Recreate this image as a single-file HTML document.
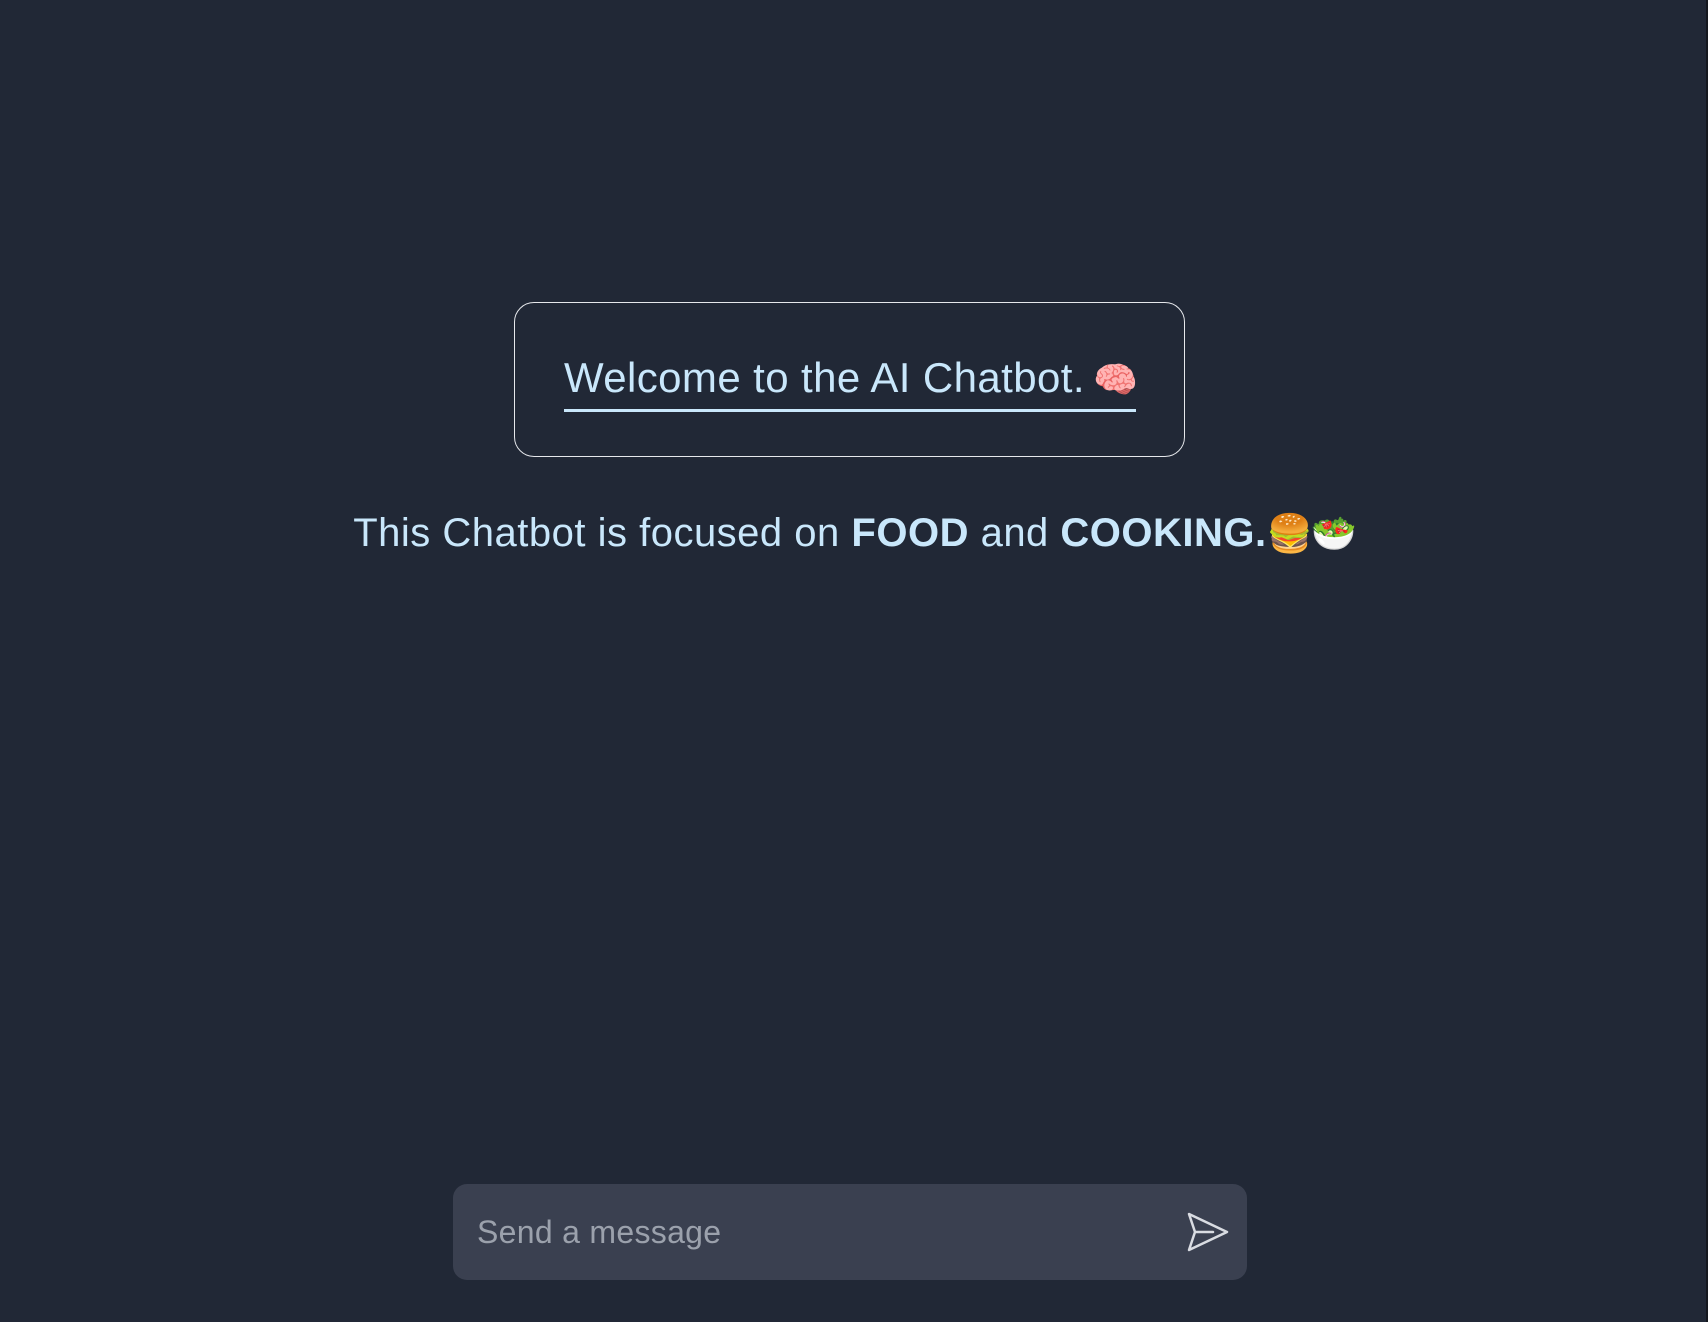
<!DOCTYPE html>
<html><head><meta charset="utf-8"><style>
html,body{margin:0;padding:0;width:1708px;height:1322px;background:#212836;overflow:hidden;font-family:"Liberation Sans",sans-serif;color:#c9e7fb}
.box{position:absolute;left:514px;top:302px;width:671px;height:155px;border:1.5px solid #e6e8ec;border-radius:20px;box-sizing:border-box}
.h{position:absolute;left:564px;top:354px;font-size:42px;line-height:48px;white-space:nowrap;letter-spacing:0.4px}
.h .e{font-size:36px;margin-left:-4px}
.ul{position:absolute;left:564px;top:409px;width:572px;height:3px;background:#c9e7fb}
.p{position:absolute;left:0;width:1708px;top:509px;text-align:center;font-size:40px;line-height:48px;white-space:nowrap;letter-spacing:0.5px}
.p b{font-weight:700}
.p .e{font-size:37px;letter-spacing:-2px}
.in{position:absolute;left:453px;top:1184px;width:794px;height:96px;background:#3a4050;border-radius:14px}
.ph{position:absolute;left:24px;top:30px;font-size:32px;line-height:36px;color:#9ba1ac;letter-spacing:0.3px}
.edge{position:absolute;right:0;top:0;width:2px;height:1322px;background:#15181f}
</style></head><body>
<div class="box"></div>
<div class="h">Welcome to the AI Chatbot. <span class="e">🧠</span></div>
<div class="ul"></div>
<div class="p">This Chatbot is focused on <b>FOOD</b> and <b>COOKING.</b><span class="e">🍔🥗</span></div>
<div class="in"><div class="ph">Send a message</div>
<svg style="position:absolute;left:732px;top:26px" width="46" height="44" viewBox="0 0 46 44"><path d="M4 4 L42 22 L4 40 L10 22 Z M10 22 L28 22" fill="none" stroke="#d9dce2" stroke-width="2.5" stroke-linejoin="round" stroke-linecap="round"/></svg>
</div>
<div class="edge"></div>
</body></html>
